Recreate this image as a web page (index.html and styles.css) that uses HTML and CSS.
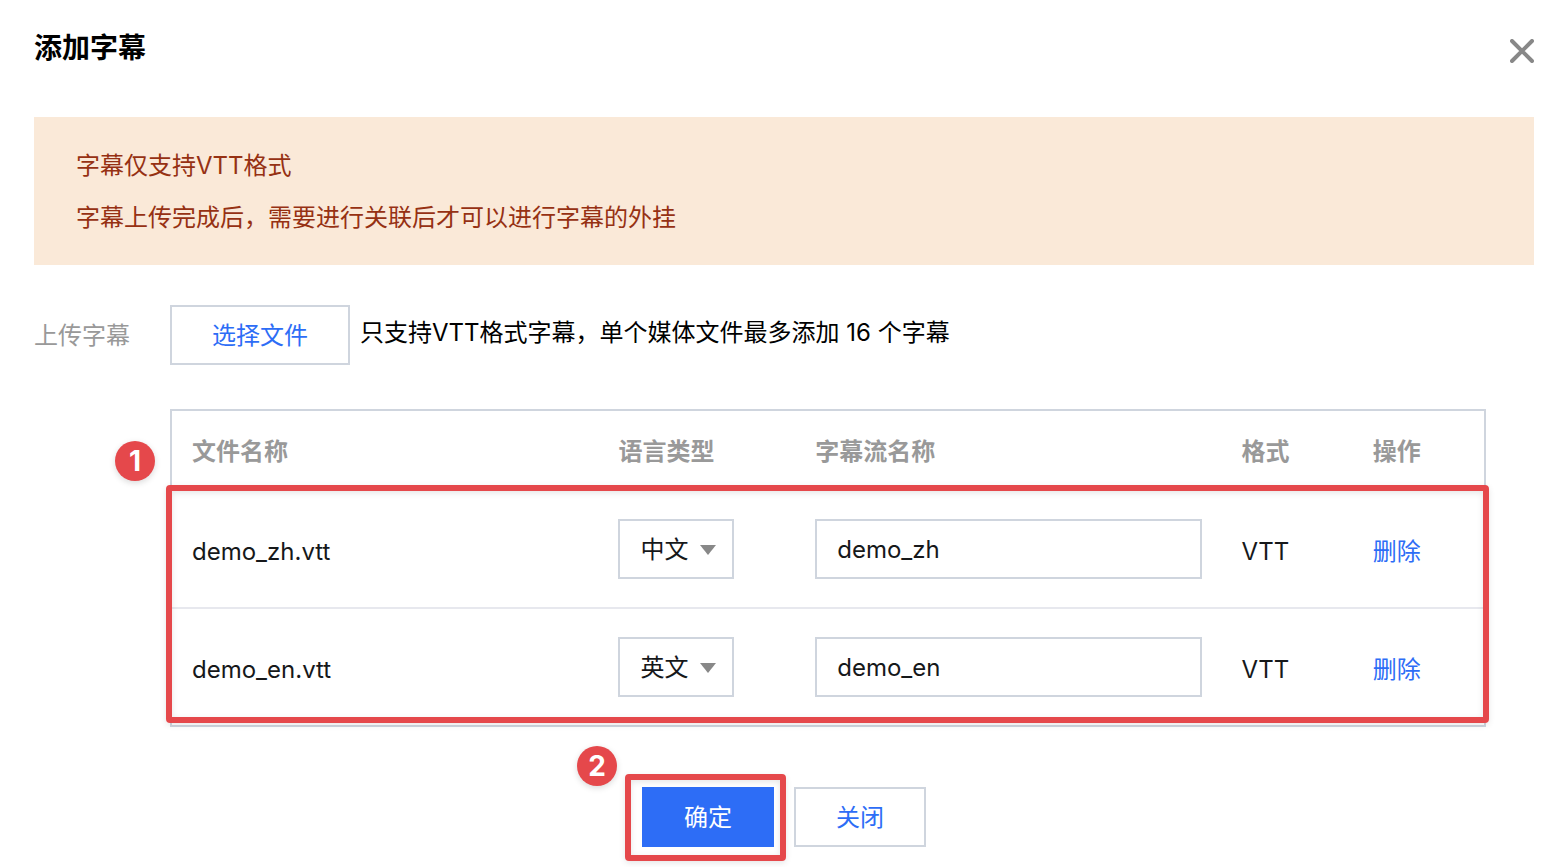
FILE: index.html
```html
<!DOCTYPE html>
<html lang="zh-CN">
<head>
    <meta charset="UTF-8">
    <meta name="viewport" content="width=device-width, initial-scale=1.0">
    <title>添加字幕</title>
    <link rel="stylesheet" href="styles.css">
</head>
<body>

    <div class="dialog">
        <div class="dialog-header">
            <h2>添加字幕</h2>
            <button type="button" class="close-btn" aria-label="关闭">
                <svg width="24" height="24" viewBox="0 0 24 24" fill="none" stroke="#888" stroke-width="4" stroke-linecap="round">
                    <path d="M2 2L22 22M22 2L2 22"/>
                </svg>
            </button>
        </div>

        <div class="notice">
            <p>字幕仅支持VTT格式</p>
            <p>字幕上传完成后，需要进行关联后才可以进行字幕的外挂</p>
        </div>

        <form id="subtitleForm">
            <div class="upload">
                <label class="upload-label" for="choose_file">上传字幕</label>
                <button type="button" id="choose_file" class="btn">选择文件</button>
                <span class="upload-tip">只支持VTT格式字幕，单个媒体文件最多添加 16 个字幕</span>
            </div>

            <div class="file-list">
                <table>
                    <thead>
                        <tr>
                            <th class="col-wide">文件名称</th>
                            <th class="col-lang">语言类型</th>
                            <th class="col-wide">字幕流名称</th>
                            <th class="col-small">格式</th>
                            <th class="col-small">操作</th>
                        </tr>
                    </thead>
                    <tbody>
                        <tr>
                            <td class="cell-text">demo_zh.vtt</td>
                            <td>
                                <div class="select-box">
                                    <select name="lang_zh" aria-label="语言类型">
                                        <option value="zh" selected>中文</option>
                                        <option value="en">英文</option>
                                    </select>
                                    <svg class="arrow" width="16" height="10" viewBox="0 0 16 10"><path d="M0 0H16L8 10Z" fill="#888"/></svg>
                                </div>
                            </td>
                            <td><input type="text" name="name_zh" value="demo_zh" aria-label="字幕流名称"></td>
                            <td class="cell-text">VTT</td>
                            <td class="cell-text"><a href="#">删除</a></td>
                        </tr>
                        <tr>
                            <td class="cell-text">demo_en.vtt</td>
                            <td>
                                <div class="select-box">
                                    <select name="lang_en" aria-label="语言类型">
                                        <option value="zh">中文</option>
                                        <option value="en" selected>英文</option>
                                    </select>
                                    <svg class="arrow" width="16" height="10" viewBox="0 0 16 10"><path d="M0 0H16L8 10Z" fill="#888"/></svg>
                                </div>
                            </td>
                            <td><input type="text" name="name_en" value="demo_en" aria-label="字幕流名称"></td>
                            <td class="cell-text">VTT</td>
                            <td class="cell-text"><a href="#">删除</a></td>
                        </tr>
                    </tbody>
                </table>
                <div class="mark mark-rows"></div>
                <span class="step step-one">1</span>
            </div>

            <div class="actions">
                <div class="confirm">
                    <button type="submit" class="btn btn-primary">确定</button>
                    <div class="mark mark-confirm"></div>
                    <span class="step step-two">2</span>
                </div>
                <button type="button" class="btn">关闭</button>
            </div>
        </form>
    </div>

</body>
</html>
```
FILE: styles.css
```css
* {
    box-sizing: border-box;
}
body {
    margin: 0;
    font-family: Inter, "Noto Sans CJK SC", sans-serif;
    font-size: 24px;
    line-height: 36px;
    color: #000;
    background-color: #fff;
}
button, input, select {
    font: inherit;
    border-radius: 0;
}
.dialog {
    padding: 28px 32px 20px 34px;
}

/* header */
.dialog-header {
    display: flex;
    justify-content: space-between;
    align-items: flex-start;
    margin-bottom: 49px;
}
h2 {
    margin: 0;
    font-size: 28px;
    line-height: 40px;
    font-weight: bold;
}
.close-btn {
    display: flex;
    padding: 11px 0 0;
    border: none;
    background: none;
    cursor: pointer;
}

.notice {
    padding: 23px 42px 21px;
    background-color: #fae9d8;
    color: #963113;
}
.notice p {
    margin: 0;
    line-height: 52px;
}

/* upload row */
.upload {
    display: flex;
    align-items: center;
    margin-top: 40px;
}
.upload-label {
    width: 136px;
    padding-top: 2px;
    color: #999;
}
.upload-tip {
    margin-left: 10px;
    padding-bottom: 4px;
}
.btn {
    height: 60px;
    padding: 2px 40px 0;
    border: 2px solid #cfd5de;
    background-color: #fff;
    color: #2d6df6;
    cursor: pointer;
}
.btn-primary {
    border-color: #2d6df6;
    background-color: #2d6df6;
    color: #fff;
}

/* subtitle files */
.file-list {
    position: relative;
    margin: 44px 48px 0 136px;
    border: 2px solid #cfd5de;
}
table {
    width: 100%;
    table-layout: fixed;
    border-collapse: separate;
    border-spacing: 0;
    color: #16181a;
}
th, td {
    padding: 0 20px;
    text-align: left;
    border-bottom: 2px solid #e7e8ee;
}
th {
    height: 80px;
    padding-top: 4px;
    color: #999;
    font-weight: bold;
}
td {
    height: 118px;
}
.cell-text {
    padding-top: 6px;
}
tbody tr:last-child td {
    height: 116px;
    border-bottom: none;
}
.col-wide {
    width: 32.5%;
}
.col-lang {
    width: 15%;
}
.col-small {
    width: 10%;
}
a {
    color: #2d6df6;
    text-decoration: none;
}
input, select {
    display: block;
    height: 60px;
    padding: 0 20px;
    border: 2px solid #cfd5de;
    background-color: #fff;
    color: #16181a;
}
input {
    width: 100%;
}
.select-box {
    position: relative;
    width: 116px;
}
select {
    width: 100%;
    padding-top: 2px;
    appearance: none;
}
.arrow {
    position: absolute;
    right: 18px;
    top: 26px;
    pointer-events: none;
}

.actions {
    display: flex;
    justify-content: center;
    gap: 20px;
    margin-top: 60px;
}
.confirm {
    position: relative;
}

/* step marks */
.mark {
    position: absolute;
    border: 6px solid #e5484b;
    border-radius: 4px;
    box-shadow: 0 2px 6px rgba(0,0,0,0.1), inset 0 2px 6px rgba(0,0,0,0.1);
    pointer-events: none;
}
.mark-rows {
    top: 74px;
    right: -5px;
    bottom: 2px;
    left: -6px;
}
.mark-confirm {
    top: -13px;
    right: -12px;
    bottom: -14px;
    left: -17px;
}
.step {
    position: absolute;
    width: 40px;
    height: 40px;
    border-radius: 50%;
    background-color: #e5484b;
    box-shadow: 0 2px 6px rgba(0,0,0,0.15);
    color: #fff;
    font-size: 28px;
    line-height: 40px;
    font-weight: bold;
    text-align: center;
}
.step-one {
    top: 30px;
    left: -57px;
}
.step-two {
    top: -41px;
    left: -65px;
}
```
